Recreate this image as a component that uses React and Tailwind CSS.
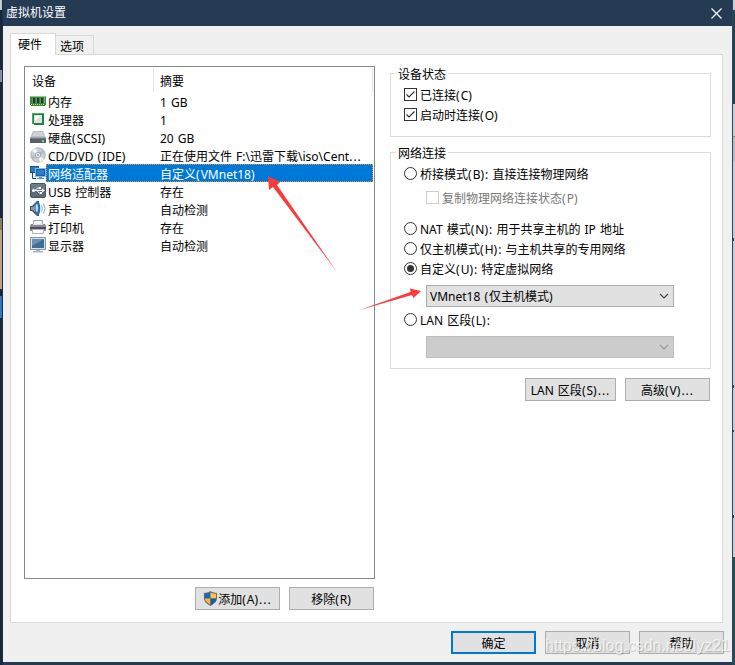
import { useState } from 'react';
import clsx from 'clsx';

const DEVICES = [
  { id: 'memory', name: '内存', summary: '1 GB', Icon: MemoryIcon },
  { id: 'cpu', name: '处理器', summary: '1', Icon: CpuIcon },
  { id: 'disk', name: '硬盘(SCSI)', summary: '20 GB', Icon: DiskIcon },
  { id: 'cd', name: 'CD/DVD (IDE)', summary: '正在使用文件 F:\\迅雷下载\\iso\\Cent...', Icon: DiscIcon },
  { id: 'net', name: '网络适配器', summary: '自定义(VMnet18)', Icon: NetworkIcon },
  { id: 'usb', name: 'USB 控制器', summary: '存在', Icon: UsbIcon },
  { id: 'sound', name: '声卡', summary: '自动检测', Icon: SoundIcon },
  { id: 'printer', name: '打印机', summary: '存在', Icon: PrinterIcon },
  { id: 'display', name: '显示器', summary: '自动检测', Icon: DisplayIcon },
];

function MemoryIcon() {
  return (
    <svg width="16" height="16" viewBox="0 0 16 16">
      <path d="M0 3h16v9h-1v1H1v-1H0z" fill="#2f8a35" />
      <path d="M0 3h16v1H0z" fill="#8cc98c" />
      <path d="M2 5h3v5H2zM6 5h3v5H6zM10 5h3v5h-3z" fill="#26352a" />
      <path d="M2 5h1v5H2zM6 5h1v5H6zM10 5h1v5h-1z" fill="#78867b" />
      <path d="M1 11.500h14" stroke="#d6cf7c" strokeDasharray="1 1" />
      <path d="M14 4h1v6h-1z" fill="#76b878" />
    </svg>
  );
}

function CpuIcon() {
  return (
    <svg width="16" height="16" viewBox="0 0 16 16">
      <rect x="2" y="2" width="12" height="12" fill="#23833a" />
      <path d="M2 2h12v1H3v11H2z" fill="#4aa95d" />
      <rect x="4" y="4" width="8" height="8" fill="#dfe3df" />
      <path d="M5 5h5L5 10z" fill="#fff" />
      <path d="M2 13h2v1H2z" fill="#e8f2e8" />
    </svg>
  );
}

function DiskIcon() {
  return (
    <svg width="16" height="16" viewBox="0 0 16 16">
      <path d="M3 2h10l3 7H0z" fill="#b9bec6" />
      <path d="M4 3h8l2 4H2z" fill="#cfd3d9" />
      <path d="M0 9h16v5H0z" fill="#59616e" />
      <path d="M0 9h16" stroke="#8a919c" />
      <path d="M12 11h2v2h-2z" fill="#5fe072" />
    </svg>
  );
}

function DiscIcon() {
  return (
    <svg width="16" height="16" viewBox="0 0 16 16">
      <circle cx="8" cy="8" r="7.3" fill="#ccd1d8" stroke="#a5abb4" strokeWidth=".8" />
      <path d="M8 8L2 4a7 7 0 0 1 4-3zM8 8l6 4a7 7 0 0 1-4 3z" fill="#f3f5f7" />
      <path d="M8 8L1 9a7 7 0 0 0 2 4zM8 8l7-2a7 7 0 0 0-2-4z" fill="#b4bbc6" />
      <circle cx="8" cy="8" r="2.6" fill="#eef1f4" stroke="#8f98a5" strokeWidth=".8" />
      <circle cx="8" cy="8" r="1" fill="#8794a3" />
    </svg>
  );
}

function NetworkIcon() {
  return (
    <svg width="16" height="16" viewBox="0 0 16 16">
      <path d="M0 1h9v7H0z" fill="#0f5598" />
      <path d="M1 2h7v5H1z" fill="#2a78c0" />
      <path d="M2.500 8v5.500H6" stroke="#174b82" fill="none" />
      <path d="M5 3h11v9H5z" fill="#86bbe9" />
      <path d="M6 4h9v7H6z" fill="#125fa9" />
      <path d="M7 5h7v5H7z" fill="#2b7fcb" />
      <path d="M9 12h3v1h2v1H7v-1h2z" fill="#4d93d2" />
    </svg>
  );
}

function UsbIcon() {
  return (
    <svg width="16" height="16" viewBox="0 0 16 16">
      <rect x="0.500" y="0.500" width="15" height="14" rx="1.500" fill="#5c6b7a" stroke="#465463" />
      <path d="M1 1h14v6H1z" fill="#748291" opacity=".6" />
      <path d="M3 7.500h10M5 7.500L7.500 5H9M7 7.500L9 10h1.500" stroke="#fff" fill="none" />
      <circle cx="3.500" cy="7.500" r="1.500" fill="#fff" />
      <path d="M12 5.500l3 2-3 2zM9 4h2v2H9zM10 9h2v2h-2z" fill="#fff" />
    </svg>
  );
}

function SoundIcon() {
  return (
    <svg width="16" height="16" viewBox="0 0 16 16">
      <path d="M0 5h2l5-5h2v15H7l-5-5H0z" fill="#42505f" />
      <path d="M1 6h2l4-4v11L3 9H1z" fill="#8c99a7" />
      <ellipse cx="7.500" cy="7.500" rx="2.800" ry="7" fill="#2472b3" />
      <ellipse cx="6.800" cy="7" rx="1.300" ry="4" fill="#b5dcf7" />
      <path d="M11.500 4.500q1.800 3 0 6M13.500 2.500q3 5 0 10" stroke="#7ba9d4" fill="none" />
    </svg>
  );
}

function PrinterIcon() {
  return (
    <svg width="16" height="16" viewBox="0 0 16 16">
      <path d="M3.500 1.500h9v6h-9z" fill="#f3f4f6" stroke="#9ba1a9" />
      <path d="M1 5h14l1 2v5H0V7z" fill="#8b8995" />
      <path d="M3 5h10v1H3z" fill="#dee0e4" />
      <path d="M0 8h16v2H0z" fill="#514e5b" />
      <path d="M2.500 10.500h11v4h-11z" fill="#fff" stroke="#b0b3bb" />
    </svg>
  );
}

function DisplayIcon() {
  return (
    <svg width="16" height="16" viewBox="0 0 16 16">
      <path d="M.5.5h15v12H.5z" fill="#d6e0e8" stroke="#8495a4" />
      <path d="M2 2h12v9H2z" fill="#416d95" />
      <path d="M2 2h12L2 9z" fill="#6792b3" />
      <path d="M6 13h4v1h3v1.500H3V14h3z" fill="#a7b3bd" />
    </svg>
  );
}

function ShieldIcon() {
  return (
    <svg width="15" height="17" viewBox="0 0 16 17" className="-mt-[3px]">
      <path d="M8 .5C6 2 3.500 2.500 1 2.500V8c0 4 3.500 6.500 7 8.500 3.500-2 7-4.500 7-8.500V2.500C12.500 2.500 10 2 8 .5z" fill="#5c6972" />
      <path d="M8 2v6.500H2V3.500C4.500 3.500 6.500 3 8 2z" fill="#1767c2" />
      <path d="M8 2v6.500h6V3.500C11.500 3.500 9.500 3 8 2z" fill="#ffc63c" />
      <path d="M2 8.500h6v6.800C5 13.500 2.300 11.500 2 8.500z" fill="#fdb92d" />
      <path d="M14 8.500H8v6.800c3-1.800 5.700-3.800 6-6.800z" fill="#0e5bb5" />
    </svg>
  );
}

// Dialog text with slightly wider spaces, brackets and dots
function Label({ text, className }) {
  return (
    <span className={clsx('whitespace-nowrap [word-spacing:1px]', className)}>
      {text.split(/([().]+)/).map((part, i) =>
        i % 2 ? <span key={i} className="tracking-[1px]">{part}</span> : part
      )}
    </span>
  );
}

function Checkbox({ checked, disabled, onChange, label, className }) {
  return (
    <button
      type="button"
      disabled={disabled}
      onClick={onChange}
      className={clsx('flex h-5 items-center gap-[3px] pb-px', disabled && 'text-[#777]', className)}
    >
      <span
        className={clsx(
          'flex h-[13px] w-[13px] shrink-0 items-center justify-center border bg-white',
          disabled ? 'border-[#ccc]' : 'border-[#333]'
        )}
      >
        {checked && (
          <svg width="11" height="11" viewBox="0 0 11 11">
            <path d="M1.500 5.500L4 8l5.500-5.500" fill="none" stroke="#333" strokeWidth="1.200" />
          </svg>
        )}
      </span>
      <Label text={label} className="relative top-[1.5px]" />
    </button>
  );
}

function Radio({ checked, onChange, label, className }) {
  return (
    <button
      type="button"
      onClick={onChange}
      className={clsx('flex h-5 items-center gap-[3px] pb-px', className)}
    >
      <svg width="13" height="13" viewBox="0 0 13 13" className="shrink-0">
        <circle cx="6.500" cy="6.500" r="6" fill="#fff" stroke="#333" />
        {checked && <circle cx="6.500" cy="6.500" r="3.500" fill="#333" />}
      </svg>
      <Label text={label} className="relative top-[1.5px]" />
    </button>
  );
}

function Select({ value = '', disabled, className }) {
  return (
    <div
      className={clsx(
        'flex h-[22px] w-[248px] items-center justify-between border pr-1 pl-[3px]',
        disabled ? 'border-[#bfbfbf] bg-[#ccc] text-[#999]' : 'border-[#adadad] bg-[#e1e1e1] text-black',
        className
      )}
    >
      <Label text={value} className="pt-0.5" />
      <svg width="10" height="6" viewBox="0 0 10 6">
        <path d="M1 1l4 4 4-4" fill="none" stroke={disabled ? '#999' : '#444'} strokeWidth="1.100" />
      </svg>
    </div>
  );
}

function Button({ primary, className, icon, label }) {
  return (
    <button
      type="button"
      className={clsx(
        'flex h-[23px] shrink-0 items-center justify-center bg-[#e1e1e1] pt-0.5',
        primary ? 'border-2 border-[#0078d7]' : 'border border-[#adadad]',
        className
      )}
    >
      {icon}
      <Label text={label} />
    </button>
  );
}

function GroupBox({ title, className, children }) {
  return (
    <section className={clsx('relative w-[321px] border border-[#dcdcdc]', className)}>
      <h2 className="absolute -top-2 left-[5px] bg-white pr-0.5 pl-0.5 leading-[18px]">{title}</h2>
      {children}
    </section>
  );
}

export default function App() {
  const [selected, setSelected] = useState('net');
  const [connected, setConnected] = useState(true);
  const [autoConnect, setAutoConnect] = useState(true);
  const [mode, setMode] = useState('custom');

  return (
    <div className="relative flex h-[665px] w-[735px] overflow-hidden bg-[#253a53] font-['Noto_Sans','Noto_Sans_CJK_SC',sans-serif] text-xs leading-[18px] text-black">
      {/* Desktop showing on the left */}
      <div className="flex w-[3px] shrink-0 flex-col border-r border-[#17304c] bg-[#16283a]">
        <div className="h-2.5 bg-[#c9c9c9]" />
        <div className="mt-[60px] h-3 bg-[#87909a]" />
        <div className="mt-[136px] h-3 bg-[#8d7b60]" />
        <div className="h-[59px] bg-[#bca28a]" />
        <div className="mt-[7px] h-[22px] bg-[#3974bc]" />
      </div>

      <div className="flex w-[729px] shrink-0 flex-col">
        {/* Title bar */}
        <header className="flex h-[26px] shrink-0 items-center justify-between bg-[#253a53] pr-2.5 pl-[3px] text-white">
          <h1>虚拟机设置</h1>
          <svg width="11" height="11" viewBox="0 0 11 11">
            <path d="M.5.5l10 10M10.500.5l-10 10" stroke="#fff" strokeWidth="1.200" />
          </svg>
        </header>

        <main className="flex h-[636px] flex-col bg-[#f0f0f0] pt-[7px] pl-[7px]">
          {/* Tabs */}
          <nav className="flex h-[21px] items-end">
            <div className="z-10 -mb-px h-[22px] w-[46px] border border-b-0 border-[#d9d9d9] bg-white pt-[2px] pl-[7px]">
              硬件
            </div>
            <div className="h-[19px] w-[38px] border border-b-0 border-l-0 border-[#d9d9d9] bg-[#f0f0f0] pt-0.5 pl-1">
              选项
            </div>
          </nav>

          <div className="flex h-[569px] w-[713px] border border-[#d9d9d9] bg-white pt-[11px] pl-[13px]">
            {/* Device list */}
            <div className="w-[351px] shrink-0">
              <div className="h-[513px] border border-[#828790]">
                <div className="flex h-[25px] pt-px">
                  <div className="w-[129px] border-r border-[#e5e5e5] pt-[5px] pl-[7px]">设备</div>
                  <div className="w-[219px] border-r border-[#e5e5e5] pt-[5px] pl-1.5">摘要</div>
                </div>
                {DEVICES.map(({ id, name, summary, Icon }) => {
                  const active = id === selected;
                  return (
                    <div key={id} onClick={() => setSelected(id)} className="flex h-[18px] items-end pl-[5px]">
                      <div className="h-[17px] w-4 shrink-0">
                        <Icon />
                      </div>
                      <div
                        className={clsx(
                          'flex h-[18px] w-[327px] pt-0.5',
                          active && 'bg-[#0078d7] text-white outline-1 -outline-offset-1 outline-dotted outline-[#e08a3c]'
                        )}
                      >
                        <Label text={name} className="w-28 pl-0.5" />
                        <Label text={summary} className="pl-0.5" />
                      </div>
                    </div>
                  );
                })}
              </div>
              <div className="mt-2 flex justify-end gap-[9px] pr-px">
                <Button className="w-[85px]" icon={<ShieldIcon />} label="添加(A)..." />
                <Button className="w-[85px]" label="移除(R)" />
              </div>
            </div>

            {/* Network adapter settings */}
            <div className="ml-[15px] w-[321px] pt-[7px]">
              <GroupBox title="设备状态" className="h-16 pt-[11px] pl-[13px]">
                <Checkbox checked={connected} onChange={() => setConnected(!connected)} label="已连接(C)" />
                <Checkbox checked={autoConnect} onChange={() => setAutoConnect(!autoConnect)} label="启动时连接(O)" />
              </GroupBox>

              <GroupBox title="网络连接" className="mt-[15px] h-[217px] pt-[11px] pl-[13px]">
                <Radio checked={mode === 'bridged'} onChange={() => setMode('bridged')} label="桥接模式(B): 直接连接物理网络" />
                <Checkbox disabled className="mt-1 ml-[22px]" label="复制物理网络连接状态(P)" />
                <Radio className="mt-[11px]" checked={mode === 'nat'} onChange={() => setMode('nat')} label="NAT 模式(N): 用于共享主机的 IP 地址" />
                <Radio checked={mode === 'host'} onChange={() => setMode('host')} label="仅主机模式(H): 与主机共享的专用网络" />
                <Radio checked={mode === 'custom'} onChange={() => setMode('custom')} label="自定义(U): 特定虚拟网络" />
                <Select className="mt-1.5 ml-[22px]" value="VMnet18 (仅主机模式)" />
                <Radio className="mt-[3px]" checked={mode === 'lan'} onChange={() => setMode('lan')} label="LAN 区段(L):" />
                <Select className="mt-1.5 ml-[22px]" disabled />
              </GroupBox>

              <div className="mt-[9px] flex justify-end gap-[9px] pr-px">
                <Button className="w-[91px]" label="LAN 区段(S)..." />
                <Button className="w-[85px]" label="高级(V)..." />
              </div>
            </div>
          </div>

          <footer className="mt-2 flex justify-end gap-[9px] pr-2">
            <Button primary className="w-[85px]" label="确定" />
            <Button className="w-[85px]" label="取消" />
            <Button className="w-[85px]" label="帮助" />
          </footer>
        </main>
      </div>

      {/* Desktop showing on the right */}
      <div className="flex w-[3px] shrink-0 flex-col border-l border-[#2b4566] bg-[#cdcbce]">
        <div className="mt-2.5 h-[94px] bg-[#24434b]" />
        <div className="mt-8 h-px bg-[#888]" />
        <div className="h-[25px] bg-[#bdbbbd]" />
        <div className="mt-[76px] h-[3px] w-px bg-[#2a3c4c]" />
        <div className="mt-36 h-[3px] w-px bg-[#2a3c4c]" />
        <div className="mt-[42px] h-[2px] w-px bg-[#2a3c4c]" />
        <div className="mt-[83px] h-[3px] w-px bg-[#2a3c4c]" />
        <div className="mt-[39px] flex-1 bg-[#2b4a50]" />
      </div>

      {/* Annotation arrows */}
      <svg className="pointer-events-none absolute inset-0" width="735" height="665" viewBox="0 0 735 665">
        <path d="M268 176l12 6-3 3 60 87-64-85-4 3z" fill="#fb3b3b" />
        <path d="M421 291l-11-2.500.5 3.500-52.500 18.500 54-15.500 1.500 3z" fill="#fb3b3b" />
      </svg>

      <span className="pointer-events-none absolute top-[637px] left-[545px] font-['Liberation_Sans',sans-serif] text-base leading-[18px] whitespace-nowrap text-white/70 [text-shadow:1px_1px_1px_rgba(0,0,0,0.2)]">
        https://blog.csdn.net/lyz21
      </span>
    </div>
  );
}
